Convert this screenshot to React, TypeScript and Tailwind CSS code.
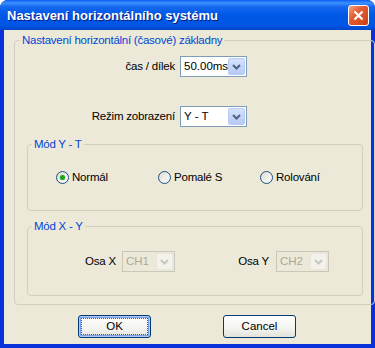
import React from "react";

const font = { fontFamily: '"Liberation Sans", Arial, sans-serif' };

const Chevron = ({ color }: { color: string }) => (
  <svg width="9" height="6" viewBox="0 0 9 6">
    <path d="M1 1 L4.5 4.5 L8 1" fill="none" stroke={color} strokeWidth="2" />
  </svg>
);

const Combo = ({
  value,
  width,
  disabled,
}: {
  value: string;
  width: string;
  disabled?: boolean;
}) => (
  <div
    className={`${width} h-[21px] flex items-center justify-between border ${
      disabled ? "border-[#C9C7BA] bg-[#ECE9D8]" : "border-[#7F9DB9] bg-white"
    }`}
  >
    <span
      className={`pl-[3px] text-[11.5px] leading-none ${
        disabled ? "text-[#ACA899]" : "text-black"
      }`}
    >
      {value}
    </span>
    <div
      className={`w-[17px] h-[17px] mr-[1px] flex items-center justify-center rounded-[2px] border ${
        disabled
          ? "border-[#E8E6DC] bg-[#F3F2EC]"
          : "border-[#B9CCF7] bg-[linear-gradient(to_bottom,#D6E2FD,#B7CAF6)]"
      }`}
    >
      <Chevron color={disabled ? "#C9C7BA" : "#4D6185"} />
    </div>
  </div>
);

const Radio = ({ label, checked }: { label: string; checked?: boolean }) => (
  <div className="flex items-center gap-[3px]">
    <div className="w-[13px] h-[13px] rounded-full border border-[#1C5180] bg-[linear-gradient(135deg,#DCDCD4,#FFFFFF)] flex items-center justify-center">
      {checked && (
        <div className="w-[5px] h-[5px] rounded-full bg-[#21A121] shadow-[0_0_1px_#5ED35E]" />
      )}
    </div>
    <span className="text-[11.5px] tracking-[-0.2px] leading-none text-black">{label}</span>
  </div>
);

const Button = ({ label, focused }: { label: string; focused?: boolean }) => (
  <div
    className={`w-[73px] h-[23px] rounded-[3px] border border-[#003C74] bg-[linear-gradient(to_bottom,#FFFFFF,#F3F3EF_60%,#E3E2DA)] flex items-center justify-center ${
      focused ? "shadow-[inset_0_0_0_1px_#B0C8F6,inset_0_0_0_2px_#7B9EE7]" : ""
    }`}
  >
    <div
      className={`w-[65px] h-[15px] flex items-center justify-center ${
        focused ? "outline outline-1 outline-dotted outline-[#555]" : ""
      }`}
    >
      <span className="text-[11.5px] leading-none text-black">{label}</span>
    </div>
  </div>
);

const label = "text-[11.5px] tracking-[-0.2px] text-black";
const legend = "px-[2px] text-[11.5px] tracking-[-0.25px] leading-[13px] text-[#0046D5]";

export default function App() {
  return (
    <div
      className="w-[375px] h-[348px] flex flex-col rounded-t-[8px] overflow-hidden bg-[#0831D9]"
      style={font}
    >
      {/* title bar */}
      <div className="h-[30px] shrink-0 flex items-center justify-between pl-[7px] pr-[6px] bg-[linear-gradient(to_bottom,#0A5CF2_0%,#3D91FD_10%,#1668F0_22%,#0058E7_50%,#0055E4_85%,#0046C9_100%)]">
        <span className="text-white font-bold text-[13px] leading-none [text-shadow:1px_1px_#0A1A7A]">
          Nastavení horizontálního systému
        </span>
        <div className="w-[21px] h-[21px] rounded-[3px] border border-white bg-[linear-gradient(135deg,#F2A488,#E45A30_40%,#CC4016)] flex items-center justify-center">
          <svg width="11" height="11" viewBox="0 0 11 11">
            <path d="M1.5 1.5 L9.5 9.5 M9.5 1.5 L1.5 9.5" stroke="white" strokeWidth="2.2" />
          </svg>
        </div>
      </div>

      {/* client area */}
      <div className="flex-1 mx-[4px] mb-[4px] bg-[#ECE9D8] flex flex-col">
        <fieldset className="mt-[4px] mx-[10px] border border-[#D0D0BF] rounded-[4px] pb-[8px]">
          <legend className={`ml-[5px] ${legend}`}>
            Nastavení horizontální (časové) základny
          </legend>

          <div className="mt-[9px] flex items-center gap-[5px]">
            <span className={`w-[160px] text-right ${label}`}>čas / dílek</span>
            <Combo value="50.00ms" width="w-[67px]" />
          </div>

          <div className="mt-[29px] flex items-center gap-[5px]">
            <span className={`w-[160px] text-right ${label}`}>Režim zobrazení</span>
            <Combo value="Y - T" width="w-[67px]" />
          </div>

          <fieldset className="mt-[11px] ml-[12px] mr-[11px] border border-[#D0D0BF] rounded-[4px] pb-[26px]">
            <legend className={`ml-[4px] ${legend}`}>Mód Y - T</legend>
            <div className="mt-[20px] ml-[28px] grid grid-cols-[102px_102px_102px]">
              <Radio label="Normál" checked />
              <Radio label="Pomalé S" />
              <Radio label="Rolování" />
            </div>
          </fieldset>

          <fieldset className="mt-[9px] ml-[12px] mr-[11px] border border-[#D0D0BF] rounded-[4px] pb-[23px]">
            <legend className={`ml-[4px] ${legend}`}>Mód X - Y</legend>
            <div className="mt-[18px] ml-[28px] flex items-center">
              <span className={`w-[66px] pr-[6px] text-right ${label}`}>Osa X</span>
              <Combo value="CH1" width="w-[53px]" disabled />
              <span className={`ml-[34px] w-[67px] pr-[7px] text-right ${label}`}>Osa Y</span>
              <Combo value="CH2" width="w-[53px]" disabled />
            </div>
          </fieldset>
        </fieldset>

        <div className="mt-[10px] ml-[74px] flex gap-[72px]">
          <Button label="OK" focused />
          <Button label="Cancel" />
        </div>
      </div>
    </div>
  );
}
